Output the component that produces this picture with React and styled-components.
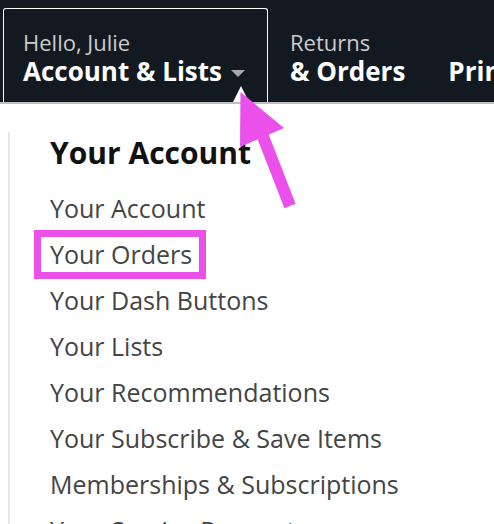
import React from "react";
import styled, { createGlobalStyle } from "styled-components";

const GlobalStyle = createGlobalStyle`
  html, body {
    margin: 0;
    padding: 0;
    background: #ffffff;
    overflow: hidden;
  }
  body {
    font-family: "Open Sans", "Noto Sans", sans-serif;
  }
`;

const Page = styled.div`
  position: relative;
  width: 494px;
  height: 524px;
  overflow: hidden;
`;

const NavBar = styled.div`
  display: flex;
  align-items: flex-end;
  height: 102px;
  padding-left: 3px;
  background: #131921;
  border-bottom: 2px solid #bfbfbf;
  white-space: nowrap;
`;

const AccountTab = styled.div`
  position: relative;
  flex: none;
  box-sizing: border-box;
  width: 265px;
  height: 94px;
  padding: 20px 0 0 19px;
  border: 1px solid #ffffff;
  border-bottom: none;
  border-radius: 3px 3px 0 0;
`;

const NavItem = styled.div`
  flex: none;
  box-sizing: border-box;
  height: 94px;
  padding-top: 21px;
  margin-left: ${(p) => p.$gap}px;
`;

const SmallLine = styled.div`
  font-size: 22px;
  line-height: 27px;
  color: #cccccc;
`;

const BigLine = styled.div`
  display: flex;
  align-items: center;
  font-size: 26px;
  line-height: 30px;
  font-weight: 700;
  color: #ffffff;
`;

const Caret = styled.span`
  width: 0;
  height: 0;
  margin: 4px 0 0 9px;
  border-left: 7px solid transparent;
  border-right: 7px solid transparent;
  border-top: 7px solid #a9a9ab;
`;

const Notch = styled.span`
  position: absolute;
  left: 229px;
  bottom: 0;
  width: 0;
  height: 0;
  border-left: 8px solid transparent;
  border-right: 8px solid transparent;
  border-bottom: 16px solid #ffffff;
`;

const Body = styled.div`
  display: flex;
  padding-top: 28px;
`;

const Rail = styled.div`
  width: 2px;
  margin-left: 8px;
  background: #e7e7e7;
  align-self: stretch;
  min-height: 420px;
`;

const Menu = styled.div`
  padding: 3px 0 0 40px;
`;

const MenuTitle = styled.div`
  font-size: 30px;
  line-height: 36px;
  font-weight: 700;
  color: #111111;
  margin-bottom: 14px;
`;

const MenuItem = styled.div`
  display: flex;
  align-items: center;
  height: 46px;
  font-size: 25px;
  line-height: 46px;
  color: #444444;
  white-space: nowrap;
`;

const Highlight = styled.span`
  margin-left: -16px;
  padding: 0 7px 0 9px;
  line-height: 35px;
  border: 7px solid #eb50eb;
`;

const ArrowLayer = styled.svg`
  position: absolute;
  left: 0;
  top: 0;
  pointer-events: none;
`;

const items = [
  "Your Account",
  "Your Orders",
  "Your Dash Buttons",
  "Your Lists",
  "Your Recommendations",
  "Your Subscribe & Save Items",
  "Memberships & Subscriptions",
  "Your Service Requests",
];

export default function App() {
  return (
    <Page>
      <GlobalStyle />
      <NavBar>
        <AccountTab>
          <SmallLine>Hello, Julie</SmallLine>
          <BigLine>
            Account &amp; Lists
            <Caret />
          </BigLine>
          <Notch />
        </AccountTab>
        <NavItem $gap={22}>
          <SmallLine>Returns</SmallLine>
          <BigLine>&amp; Orders</BigLine>
        </NavItem>
        <NavItem $gap={43}>
          <SmallLine>&nbsp;</SmallLine>
          <BigLine>Prime</BigLine>
        </NavItem>
      </NavBar>
      <Body>
        <Rail />
        <Menu>
          <MenuTitle>Your Account</MenuTitle>
          {items.map((label) => (
            <MenuItem key={label}>
              {label === "Your Orders" ? <Highlight>{label}</Highlight> : label}
            </MenuItem>
          ))}
        </Menu>
      </Body>
      <ArrowLayer width="494" height="524" viewBox="0 0 494 524">
        <polygon points="240.5,92 240,147 284,128" fill="#eb50eb" />
        <line x1="262" y1="134" x2="290" y2="206" stroke="#eb50eb" strokeWidth="12" />
      </ArrowLayer>
    </Page>
  );
}
